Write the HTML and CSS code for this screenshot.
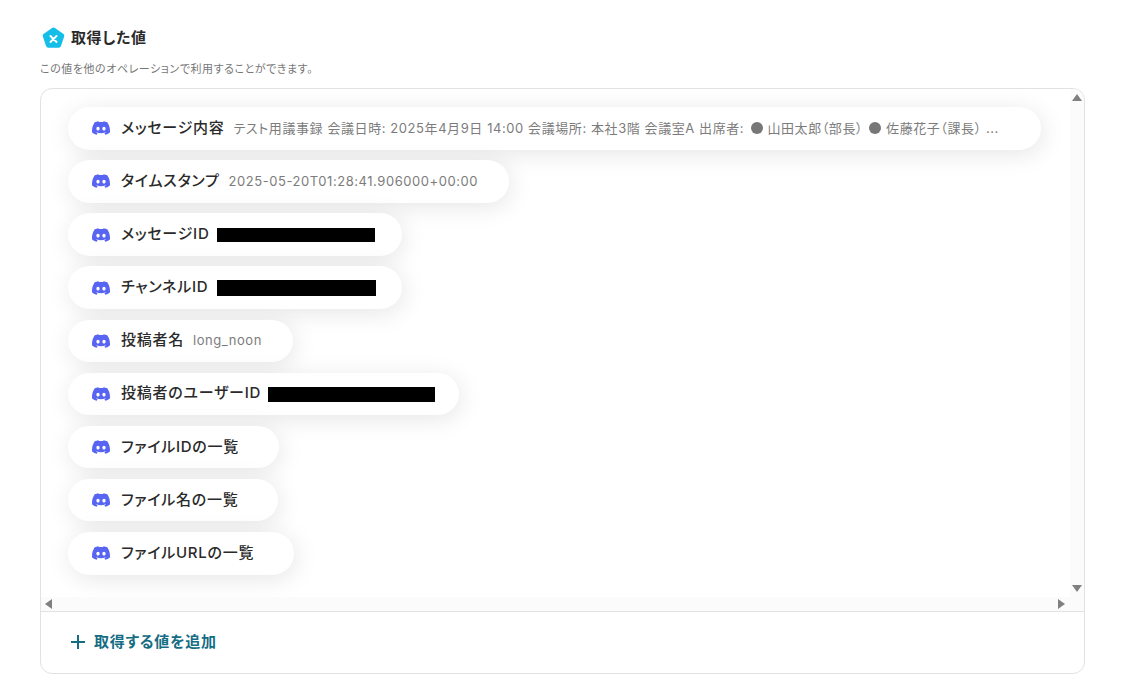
FILE: index.html
```html
<!DOCTYPE html>
<html lang="ja">
<head>
<meta charset="utf-8">
<title>取得した値</title>
<link rel="stylesheet" href="styles.css">
</head>
<body>
<svg class="defs" width="0" height="0" aria-hidden="true">
  <symbol id="discord" viewBox="0 0 24 24"><path d="M20.317 4.3698a19.7913 19.7913 0 00-4.8851-1.5152.0741.0741 0 00-.0785.0371c-.211.3753-.4447.8648-.6083 1.2495-1.8447-.2762-3.68-.2762-5.4868 0-.1636-.3933-.4058-.8742-.6177-1.2495a.077.077 0 00-.0785-.037 19.7363 19.7363 0 00-4.8852 1.515.0699.0699 0 00-.0321.0277C.5334 9.0458-.319 13.5799.0992 18.0578a.0824.0824 0 00.0312.0561c2.0528 1.5076 4.0413 2.4228 5.9929 3.0294a.0777.0777 0 00.0842-.0276c.4616-.6304.8731-1.2952 1.226-1.9942a.076.076 0 00-.0416-.1057c-.6528-.2476-1.2743-.5495-1.8722-.8923a.077.077 0 01-.0076-.1277c.1258-.0943.2517-.1923.3718-.2914a.0743.0743 0 01.0776-.0105c3.9278 1.7933 8.18 1.7933 12.0614 0a.0739.0739 0 01.0785.0095c.1202.099.246.1981.3728.2924a.077.077 0 01-.0066.1276 12.2986 12.2986 0 01-1.873.8914.0766.0766 0 00-.0407.1067c.3604.698.7719 1.3628 1.225 1.9932a.076.076 0 00.0842.0286c1.961-.6067 3.9495-1.5219 6.0023-3.0294a.077.077 0 00.0313-.0552c.5004-5.177-.8382-9.6739-3.5485-13.6604a.061.061 0 00-.0312-.0286zM8.02 15.3312c-1.1825 0-2.1569-1.0857-2.1569-2.419 0-1.3332.9555-2.4189 2.157-2.4189 1.2108 0 2.1757 1.0952 2.1568 2.419 0 1.3332-.9555 2.4189-2.1569 2.4189zm7.9748 0c-1.1825 0-2.1569-1.0857-2.1569-2.419 0-1.3332.9554-2.4189 2.1569-2.4189 1.2108 0 2.1757 1.0952 2.1568 2.419 0 1.3332-.946 2.4189-2.1568 2.4189Z"/></symbol>
</svg>
<main class="page">
  <header class="head">
    <svg class="logo" viewBox="0 0 24 24" aria-hidden="true">
      <path class="logo-shape" d="M10.5 1a2.6 2.6 0 0 1 3 0l8.6 6.1a2.6 2.6 0 0 1 1 2.9l-3.3 9.9a2.6 2.6 0 0 1-2.4 1.8H6.6a2.6 2.6 0 0 1-2.4-1.8L.9 10a2.6 2.6 0 0 1 1-2.9z"/>
      <path class="logo-x" d="M8.8 9.4l6.4 6.2M15.2 9.4l-6.4 6.2"/>
    </svg>
    <h1 class="title">取得した値</h1>
  </header>
  <p class="sub">この値を他のオペレーションで利用することができます。</p>
  <section class="panel">
    <div class="scroll">
      <div class="content">
        <ul class="list">
          <li class="pill"><svg class="dc"><use href="#discord"/></svg><span class="label">メッセージ内容</span><span class="value value-long">テスト用議事録 会議日時: 2025年4月9日 14:00 会議場所: 本社3階 会議室A 出席者: <span class="dot dot-first"></span>山田太郎（部長）<span class="dot dot-second"></span>佐藤花子（課長） ...</span></li>
          <li class="pill"><svg class="dc"><use href="#discord"/></svg><span class="label">タイムスタンプ</span><span class="value">2025-05-20T01:28:41.906000+00:00</span></li>
          <li class="pill"><svg class="dc"><use href="#discord"/></svg><span class="label">メッセージID</span><span class="mask mask-msg"></span></li>
          <li class="pill"><svg class="dc"><use href="#discord"/></svg><span class="label">チャンネルID</span><span class="mask mask-channel"></span></li>
          <li class="pill"><svg class="dc"><use href="#discord"/></svg><span class="label">投稿者名</span><span class="value">long_noon</span></li>
          <li class="pill"><svg class="dc"><use href="#discord"/></svg><span class="label">投稿者のユーザーID</span><span class="mask mask-user"></span></li>
          <li class="pill"><svg class="dc"><use href="#discord"/></svg><span class="label">ファイルIDの一覧</span><span class="value"></span></li>
          <li class="pill"><svg class="dc"><use href="#discord"/></svg><span class="label">ファイル名の一覧</span><span class="value"></span></li>
          <li class="pill"><svg class="dc"><use href="#discord"/></svg><span class="label">ファイルURLの一覧</span><span class="value"></span></li>
        </ul>
      </div>
      <div class="vbar"><span class="arrow arrow-up"></span><span class="arrow arrow-down"></span></div>
      <div class="hbar"><span class="arrow arrow-left"></span><span class="arrow arrow-right"></span></div>
      <div class="corner"></div>
    </div>
    <footer class="foot">
      <svg class="plus" viewBox="0 0 14 14" aria-hidden="true"><path d="M7 0v14M0 7h14"/></svg>
      <span class="add">取得する値を追加</span>
    </footer>
  </section>
</main>
</body>
</html>
```

FILE: styles.css
```css
* { box-sizing: border-box; }
html, body { margin: 0; background: #fff; }
body {
  font-family: Inter, "Noto Sans CJK JP", sans-serif;
  font-feature-settings: "palt";
  color: #2a2a2a;
  height: 700px;
  overflow: hidden;
}
.defs { position: absolute; }
.page { padding: 26px 46px 0 40px; }
.head { display: flex; align-items: center; gap: 6px; padding-left: 2px; height: 24px; }
.logo { width: 23px; height: 23px; flex: none; }
.logo-shape { fill: #14bee8; }
.logo-x { stroke: #fff; stroke-width: 2; fill: none; stroke-linecap: round; }
.title { margin: 0; font-size: 15px; font-weight: 600; line-height: 24px; letter-spacing: .6px; }
.sub { margin: 11px 0 0; font-size: 11px; line-height: 16px; color: #777; letter-spacing: .55px; }
.panel {
  margin-top: 11px;
  height: 586px;
  border: 1px solid #e2e2e2;
  border-radius: 12px;
  overflow: hidden;
  display: flex;
  flex-direction: column;
}
.scroll {
  flex: none;
  height: 522px;
  display: grid;
  grid-template-columns: 1fr 14px;
  grid-template-rows: 1fr 14px;
}
.content { overflow: hidden; padding: 18px 0 0 27px; }
.list { list-style: none; margin: 0; padding: 0; display: flex; flex-direction: column; align-items: flex-start; gap: 10.64px; }
.pill {
  display: inline-flex;
  align-items: center;
  height: 42.5px;
  padding: 0 31px 0 24px;
  background: #fff;
  border-radius: 22px;
  box-shadow: 2px 4px 24px rgba(0, 0, 0, .1);
  white-space: nowrap;
}
.dc { width: 18px; height: 18px; flex: none; fill: #5865f2; margin-right: 11px; }
.label { font-size: 15px; font-weight: 500; line-height: 20px; margin-right: 9px; letter-spacing: .75px; padding-bottom: 1px; box-sizing: content-box; }
.value { font-size: 13px; line-height: 20px; color: #7c7c7c; letter-spacing: .55px; padding-bottom: 1px; box-sizing: content-box; }
.value-long { width: 776px; overflow: hidden; letter-spacing: .58px; }
.dot { display: inline-block; width: 12px; height: 12px; border-radius: 50%; background: #777; vertical-align: -1px; }
.dot-first { margin: 0 4px 0 3px; }
.dot-second { margin: 0 5px 0 6px; }
.mask { background: #000; flex: none; }
.mask-msg { width: 158px; height: 14px; margin: 0 -4px 0 -2px; }
.mask-channel { width: 159px; height: 16px; margin: 1px -5px 0 0; }
.mask-user { width: 167px; height: 15px; margin: 2px -7px 0 -2px; }
.vbar, .hbar, .corner { background: #fbfbfb; position: relative; }
.vbar { grid-column: 2; grid-row: 1; }
.hbar { grid-column: 1; grid-row: 2; }
.corner { grid-column: 2; grid-row: 2; }
.arrow { position: absolute; width: 0; height: 0; border-style: solid; border-color: transparent; }
.arrow-up { top: 5px; left: 2px; border-width: 0 5px 7px; border-bottom-color: #808080; }
.arrow-down { bottom: 5px; left: 2px; border-width: 7px 5px 0; border-top-color: #808080; }
.arrow-left { left: 4px; top: 2px; border-width: 5px 7px 5px 0; border-right-color: #808080; }
.arrow-right { right: 5px; top: 2px; border-width: 5px 0 5px 7px; border-left-color: #808080; }
.foot {
  flex: 1;
  border-top: 1px solid #e2e2e2;
  display: flex;
  align-items: center;
  padding: 0 0 2px 30px;
  gap: 9px;
}
.plus { width: 14px; height: 14px; stroke: #156d84; stroke-width: 2; fill: none; flex: none; }
.add { font-size: 15px; font-weight: 600; color: #156d84; letter-spacing: .75px; padding-bottom: 2px; }
```
